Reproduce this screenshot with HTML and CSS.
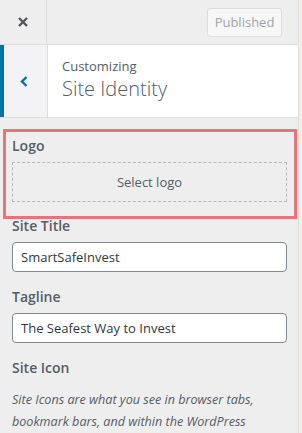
FILE: index.html
```html
<!DOCTYPE html>
<html>
<head>
    <meta charset="utf-8">
    <title>Customizing Site Identity</title>
    <link rel="stylesheet" href="styles.css">
</head>
<body>
    <div class="sidebar">
        <div class="topbar">
            <button class="close-btn" aria-label="Close">
                <svg width="10" height="10" viewBox="0 0 10 10"><path d="M1 1L9 9M9 1L1 9" stroke="#50575e" stroke-width="2.4" fill="none"/></svg>
            </button>
            <button class="published-btn" disabled>Published</button>
        </div>

        <div class="panel-head">
            <button class="back-btn" aria-label="Back">
                <svg width="8" height="11" viewBox="0 0 8 11"><path d="M6.5 1L2 5.5L6.5 10" stroke="#0073aa" stroke-width="2.4" fill="none"/></svg>
            </button>
            <div class="panel-titles">
                <span class="panel-sub">Customizing</span>
                <span class="panel-title">Site Identity</span>
            </div>
        </div>

        <div class="controls">
            <div class="control logo-control">
                <span class="control-label">Logo</span>
                <div class="placeholder">Select logo</div>
            </div>

            <div class="control">
                <label class="control-label" for="siteTitle">Site Title</label>
                <input type="text" id="siteTitle" value="SmartSafeInvest">
            </div>

            <div class="control">
                <label class="control-label" for="tagline">Tagline</label>
                <input type="text" id="tagline" value="The Seafest Way to Invest">
            </div>

            <div class="control">
                <span class="control-label">Site Icon</span>
                <p class="description">Site Icons are what you see in browser tabs, bookmark bars, and within the WordPress mobile apps.</p>
            </div>
        </div>
    </div>
    <div class="preview"></div>
</body>
</html>
```

FILE: styles.css
```css
html, body {
    margin: 0;
    height: 100%;
    overflow: hidden;
}

body {
    display: flex;
    font-family: "Open Sans", sans-serif;
    font-size: 13px;
    color: #555d66;
}

button {
    font-family: inherit;
    cursor: pointer;
}

.sidebar {
    width: 298px;
    flex-shrink: 0;
    background: #eeeeee;
    border-right: 1px solid #dddddd;
    display: flex;
    flex-direction: column;
    overflow: hidden;
}

.preview {
    flex: 1;
    background: #f4efe6;
}

.topbar {
    flex-shrink: 0;
    height: 44px;
    border-bottom: 1px solid #dddddd;
    display: flex;
    align-items: center;
    justify-content: space-between;
}

.close-btn {
    width: 47px;
    height: 44px;
    padding: 0;
    border: none;
    border-right: 1px solid #dddddd;
    background: transparent;
    display: flex;
    align-items: center;
    justify-content: center;
}

.published-btn {
    margin-right: 16px;
    height: 29px;
    width: 75px;
    padding: 0;
    border: 1px solid #dddddd;
    border-radius: 3px;
    background: #f7f7f7;
    color: #a0a5aa;
    font-size: 13px;
    cursor: default;
}

.panel-head {
    flex-shrink: 0;
    height: 72px;
    background: #ffffff;
    border-bottom: 1px solid #dddddd;
    display: flex;
}

.back-btn {
    width: 48px;
    padding: 0 4px 0 0;
    border: none;
    border-left: 4px solid #0073aa;
    border-right: 1px solid #dddddd;
    background: #f3f3f5;
    display: flex;
    align-items: center;
    justify-content: center;
}

.panel-titles {
    display: flex;
    flex-direction: column;
    justify-content: center;
    padding-left: 14px;
    padding-bottom: 2px;
}

.panel-sub {
    font-size: 13px;
    line-height: 18px;
}

.panel-title {
    font-size: 20px;
    font-weight: 300;
    line-height: 28px;
}

.controls {
    flex-shrink: 0;
    padding: 18px 11px 0 12px;
}

.control {
    margin-bottom: 15px;
}

.logo-control {
    position: relative;
    margin-bottom: 14px;
}

/* highlight drawn around the logo control */
.logo-control::after {
    content: "";
    position: absolute;
    top: -7px;
    left: -9px;
    right: -10px;
    bottom: -17px;
    border: 3px solid #e9737a;
}

.control-label {
    display: block;
    font-size: 14px;
    font-weight: 600;
    line-height: 20px;
    margin-bottom: 6px;
}

.placeholder {
    height: 38px;
    border: 1px dashed #b4b9be;
    display: flex;
    align-items: center;
    justify-content: center;
    font-size: 13px;
}

input[type="text"] {
    display: block;
    width: 100%;
    height: 30px;
    box-sizing: border-box;
    padding: 0 8px;
    border: 1px solid #7e8993;
    border-radius: 4px;
    background: #ffffff;
    font-family: inherit;
    font-size: 13px;
    color: #32373c;
}

.description {
    margin: 11px 0 0;
    font-style: italic;
    font-size: 12.6px;
    line-height: 22px;
}
```
